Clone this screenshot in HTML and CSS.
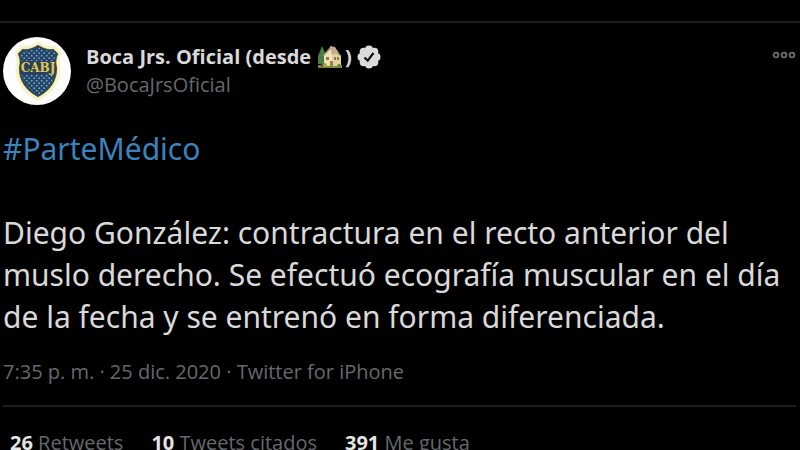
FILE: index.html
```html
<!DOCTYPE html>
<html lang="es">
<head>
    <meta charset="UTF-8">
    <meta name="viewport" content="width=device-width, initial-scale=1.0">
    <title>Boca Jrs. Oficial</title>
    <link rel="stylesheet" href="styles.css">
</head>
<body>
    <article class="tweet">
        <header class="tweet-header">
            <a class="avatar" href="#" aria-label="Boca Jrs. Oficial">
                <svg viewBox="0 0 68 68">
                    <defs>
                        <pattern id="dots" width="5" height="5" patternUnits="userSpaceOnUse">
                            <rect width="5" height="5" fill="#1f4470"/>
                            <circle cx="1.2" cy="1.2" r="0.9" fill="#86a3ae"/>
                            <circle cx="3.7" cy="3.7" r="0.9" fill="#86a3ae"/>
                        </pattern>
                    </defs>
                    <circle cx="34" cy="34" r="34" fill="#fdfdfb"/>
                    <path d="M35 6 Q27 12 19 10 L13 16 Q16 22 14 31 Q14 51 35 62 Q56 51 56 31 Q54 22 57 16 L51 10 Q43 12 35 6Z" fill="#efda80" stroke="#f8f1c8" stroke-width="3"/>
                    <path d="M35 9 Q27 14 20 13 L16 17 Q19 23 17 31 Q17 49 35 59 Q53 49 53 31 Q51 23 54 17 L50 13 Q43 14 35 9Z" fill="url(#dots)" stroke="#2f4b48" stroke-width="2"/>
                    <rect x="18" y="24" width="34" height="13" fill="#27415a"/>
                    <text x="35" y="35" text-anchor="middle" class="crest-text">CABJ</text>
                </svg>
            </a>
            <div class="author">
                <div class="name">
                    <span>Boca Jrs. Oficial (desde</span>
                    <svg class="house" viewBox="0 0 26 24" role="img" aria-label="casa">
                        <path d="M1 20 H25 V23 H1Z" fill="#73913a"/>
                        <path d="M5 1 L9 10 L8 19 H1 L1 11Z" fill="#477d46"/>
                        <path d="M4 18 H6 V22 H4Z" fill="#76522f"/>
                        <path d="M7 10 L14 3 L24 11 V21 H7Z" fill="#efe2b4"/>
                        <path d="M15 11 L19 6 L24 11 V21 H15Z" fill="#e2d3a0"/>
                        <path d="M6 11 L14 2 L24 11" fill="none" stroke="#a58b72" stroke-width="1.4"/>
                        <path d="M13 1 L18 2 L22 8 L15 10Z" fill="#c3aa90"/>
                        <path d="M9 12h3v3H9z M17 12h2v3h-2z M20 12h2v3h-2z" fill="#857b58"/>
                        <path d="M13 16h3v5h-3z" fill="#a37c45"/>
                        <circle cx="8" cy="20" r="2" fill="#9caf45"/>
                        <circle cx="22" cy="21" r="2" fill="#648a36"/>
                    </svg>
                    <span>)</span>
                    <svg class="verified" viewBox="0 0 24 24" role="img" aria-label="Cuenta verificada">
                        <g fill="#dcdcdc">
                            <circle cx="12" cy="12" r="9"/>
                            <circle cx="12" cy="4.5" r="4"/>
                            <circle cx="17.3" cy="6.7" r="4"/>
                            <circle cx="19.5" cy="12" r="4"/>
                            <circle cx="17.3" cy="17.3" r="4"/>
                            <circle cx="12" cy="19.5" r="4"/>
                            <circle cx="6.7" cy="17.3" r="4"/>
                            <circle cx="4.5" cy="12" r="4"/>
                            <circle cx="6.7" cy="6.7" r="4"/>
                        </g>
                        <path d="M7.5 12.5 L10.7 15.7 L16.5 8" fill="none" stroke="#111" stroke-width="2.2"/>
                    </svg>
                </div>
                <a class="handle" href="#">@BocaJrsOficial</a>
            </div>
            <button class="more" type="button" aria-label="Más opciones">
                <svg viewBox="0 0 24 8">
                    <g fill="none" stroke="#6c7074" stroke-width="1.8">
                        <circle cx="4" cy="4" r="2.4"/>
                        <circle cx="12" cy="4" r="2.4"/>
                        <circle cx="20" cy="4" r="2.4"/>
                    </g>
                </svg>
            </button>
        </header>

        <div class="tweet-text">
            <p><a href="#">#ParteMédico</a></p>
            <p>Diego González: contractura en el recto anterior del muslo derecho. Se efectuó ecografía muscular en el día de la fecha y se entrenó en forma diferenciada.</p>
        </div>

        <div class="meta">7:35 p. m. · 25 dic. 2020 · <a href="#">Twitter for iPhone</a></div>

        <div class="stats">
            <a href="#"><strong>26</strong> Retweets</a>
            <a href="#"><strong>10</strong> Tweets citados</a>
            <a href="#"><strong>391</strong> Me gusta</a>
        </div>
    </article>
</body>
</html>
```
FILE: styles.css
```css
body {
    margin: 0;
    background: #000;
    color: #d9d9d9;
    font-family: "Open Sans", "Noto Sans", sans-serif;
    height: 100vh;
    overflow: hidden;
}

a {
    color: inherit;
    text-decoration: none;
}

.tweet {
    margin-top: 21px;
    padding: 0 4px 0 3px;
    border-top: 2px solid #1c1e20;
}

.tweet-header {
    display: flex;
    align-items: flex-start;
    padding-top: 14px;
}

.avatar,
.avatar svg {
    display: block;
    width: 68px;
    height: 68px;
}

.crest-text {
    font-family: "DejaVu Serif", serif;
    font-size: 12px;
    font-weight: bold;
    fill: #e3c557;
}

.author {
    flex: 1;
    margin-left: 15px;
    padding-top: 6px;
}

.name {
    display: flex;
    align-items: center;
    font-size: 20px;
    font-weight: bold;
    line-height: 28px;
}

.house {
    width: 26px;
    height: 24px;
    margin: 0 2px 0 6px;
}

.verified {
    width: 24px;
    height: 24px;
    margin-left: 5px;
}

.handle {
    display: block;
    color: #65696d;
    font-size: 20px;
    line-height: 28px;
}

.more {
    margin-top: 14px;
    padding: 0;
    border: none;
    background: none;
    cursor: pointer;
}

.more svg {
    display: block;
    width: 24px;
    height: 8px;
}

.tweet-text {
    margin-top: 23px;
    font-family: "Noto Sans", "Open Sans", sans-serif;
    font-size: 30px;
    line-height: 42px;
}

.tweet-text p {
    margin: 0 0 42px;
}

.tweet-text p:last-child {
    margin-bottom: 0;
}

.tweet-text a {
    color: #3a83bd;
}

.meta {
    margin-top: 20px;
    padding-bottom: 19px;
    border-bottom: 2px solid #1c1e20;
    color: #65696d;
    font-size: 20px;
    line-height: 28px;
}

.stats {
    display: flex;
    gap: 28px;
    padding: 22px 7px;
    color: #65696d;
    font-size: 20px;
    line-height: 28px;
}

.stats strong {
    color: #e4e4e4;
}
```
